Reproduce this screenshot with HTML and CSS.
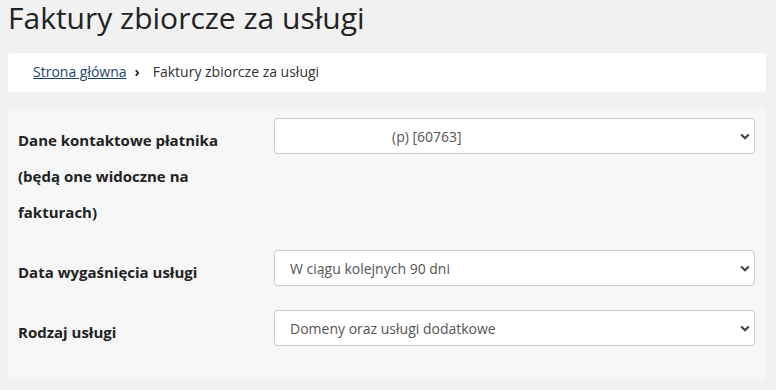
FILE: index.html
```html
<!DOCTYPE html>
<html lang="pl">
<head>
<meta charset="utf-8">
<title>Faktury zbiorcze za usługi</title>
<link rel="stylesheet" href="styles.css">
</head>
<body>
<div class="page">
  <h1 class="title">Faktury zbiorcze za usługi</h1>
  <nav class="breadcrumb">
    <a class="crumb-link" href="#">Strona główna</a>
    <span class="crumb-sep">›</span>
    <span class="crumb-current">Faktury zbiorcze za usługi</span>
  </nav>
  <form class="panel">
    <div class="row">
      <label class="label">Dane kontaktowe płatnika (będą one widoczne na fakturach)</label>
      <div class="control">
        <select class="select select--indent"><option>(p) [60763]</option></select>
        <svg class="chev" width="10" height="7" viewBox="0 0 10 7"><path d="M1.2 1.5L5 5.2L8.8 1.5" fill="none" stroke="#444" stroke-width="2.2"/></svg>
      </div>
    </div>
    <div class="row">
      <label class="label">Data wygaśnięcia usługi</label>
      <div class="control">
        <select class="select"><option>W ciągu kolejnych 90 dni</option></select>
        <svg class="chev" width="10" height="7" viewBox="0 0 10 7"><path d="M1.2 1.5L5 5.2L8.8 1.5" fill="none" stroke="#444" stroke-width="2.2"/></svg>
      </div>
    </div>
    <div class="row">
      <label class="label">Rodzaj usługi</label>
      <div class="control">
        <select class="select"><option>Domeny oraz usługi dodatkowe</option></select>
        <svg class="chev" width="10" height="7" viewBox="0 0 10 7"><path d="M1.2 1.5L5 5.2L8.8 1.5" fill="none" stroke="#444" stroke-width="2.2"/></svg>
      </div>
    </div>
  </form>
</div>
</body>
</html>
```
FILE: styles.css
```css
* { box-sizing: border-box; }
html, body { margin: 0; padding: 0; }
body {
  background: #f1f1f1;
  font-family: "Open Sans", "DejaVu Sans", sans-serif;
  color: #222;
}
.page { padding: 0 10px 0 8px; }
.title {
  margin: 0 0 17px;
  font-size: 30px;
  font-weight: 400;
  line-height: 36px;
  color: #222;
}
.breadcrumb {
  background: #fff;
  border-radius: 4px;
  padding: 9px 25px 10px;
  font-size: 14px;
  line-height: 20px;
  display: flex;
  align-items: baseline;
}
.crumb-link { color: #1d436b; text-decoration: underline; }
.crumb-sep { font-weight: 700; margin: 0 13px 0 8px; color: #222; }
.crumb-current { color: #333; }
.panel {
  margin-top: 16px;
  background: #f7f7f7;
  padding: 10px 11px 10px 10px;
}
.row {
  display: grid;
  grid-template-columns: 256px 1fr;
  margin-bottom: 20px;
  align-items: start;
}
.label {
  font-size: 15px;
  font-weight: 700;
  line-height: 36px;
  padding-top: 4px;
  padding-right: 50px;
  color: #222;
}
.control { position: relative; }
.select {
  display: block;
  width: 100%;
  height: 36px;
  -webkit-appearance: none;
  appearance: none;
  background: #fff;
  border: 1px solid #ccc;
  border-radius: 4px;
  padding: 0 30px 0 15px;
  font-family: "Open Sans", "DejaVu Sans", sans-serif;
  font-size: 14px;
  color: #555;
  outline: none;
}
.select--indent { padding-left: 117px; }
.chev {
  position: absolute;
  right: 5px;
  top: 15px;
  pointer-events: none;
}
```
